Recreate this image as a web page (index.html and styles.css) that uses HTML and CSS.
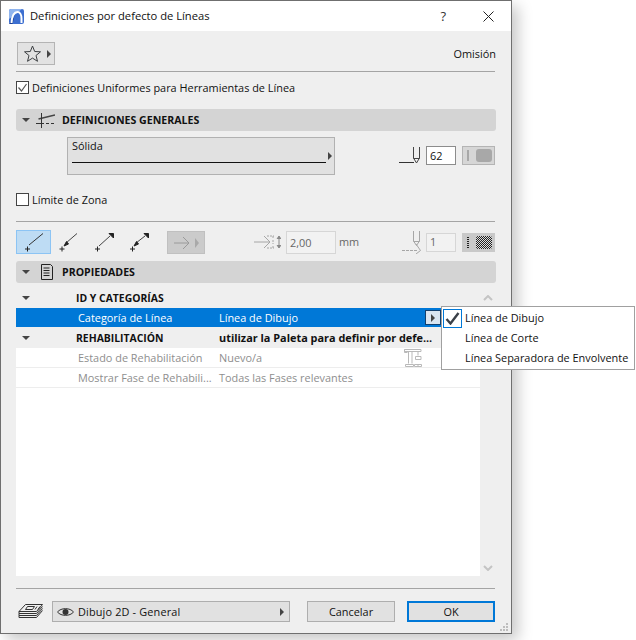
FILE: index.html
```html
<!DOCTYPE html>
<html lang="es">
<head>
<meta charset="utf-8">
<title>Definiciones por defecto de Líneas</title>
<link rel="stylesheet" href="styles.css">
</head>
<body>
<div class="window">
  <header class="titlebar">
    <svg class="app-icon" width="15" height="15" viewBox="0 0 15 15"><rect width="15" height="15" rx="2" fill="#3d6fd0"/><path d="M0 2a2 2 0 0 1 2-2h11l-13 10z" fill="#8fb4ee"/><path d="M0 15L5.500 7 3.500 15z" fill="#1c3f96"/><path d="M2.500 14C3 7 5.500 3 8.500 3c2.500 0 4 3 4 6.500V14" fill="none" stroke="#fff" stroke-width="2"/></svg>
    <span class="title">Definiciones por defecto de Líneas</span>
    <span class="help">?</span>
    <svg class="close" width="11" height="11" viewBox="0 0 11 11"><path d="M.5.500l10 10M10.500.500l-10 10" stroke="#222" stroke-width="1" fill="none"/></svg>
  </header>
  <main class="body">
    <div class="fav-row">
      <button class="fav">
        <svg width="17" height="17" viewBox="0 0 17 17"><path d="M8.500 1l2.200 5.500 5.800.3-4.500 3.700 1.500 5.800-5-3.200-5 3.200 1.500-5.800L.5 6.800l5.800-.3z" fill="none" stroke="#3c3f42" stroke-width="1"/></svg>
        <i class="tri"></i>
      </button>
      <span class="omision">Omisión</span>
    </div>
    <hr class="rule rule-a">
    <label class="check check-a"><span class="box"><svg width="13" height="13" viewBox="0 0 13 13"><path d="M2.500 6.500l3 3.500 5-7" fill="none" stroke="#555" stroke-width="1.200"/></svg></span>Definiciones Uniformes para Herramientas de Línea</label>
    <div class="section section-a">
      <i class="tri-down"></i>
      <svg class="sec-icon" width="19" height="15" viewBox="0 0 19 15"><path d="M2.500 6L19 2" stroke="#444" stroke-width="1.600" fill="none"/><path d="M5.500 0v15" stroke="#333" fill="none"/><path d="M0 10.500h8M10 10.500h3M15 10.500h3" stroke="#333" fill="none"/></svg>
      <span>DEFINICIONES GENERALES</span>
    </div>
    <div class="general">
      <div class="line-select">
        <div class="line-col">
          <span>Sólida</span>
          <i class="line"></i>
        </div>
        <i class="tri"></i>
      </div>
      <div class="pen-group">
        <svg class="pen1" width="21" height="19" viewBox="0 0 21 19"><path d="M0 16.500h15" stroke="#333" fill="none"/><path d="M14.500 1v11l3 5 3-5V1M14.500 12.500h6" stroke="#444" fill="none"/></svg>
        <span class="input pen-input">62</span>
        <span class="swatch"><i class="bar"></i><i class="blob"></i></span>
      </div>
    </div>
    <label class="check check-b"><span class="box"></span>Límite de Zona</label>
    <hr class="rule rule-b">
    <div class="tools">
      <button class="tool active"><svg width="33" height="22" viewBox="0 0 33 22"><path d="M12 14L26 2.500" stroke="#333" fill="none"/><path d="M10.500 15.500v5M8 18h5" stroke="#222" fill="none"/></svg></button>
      <button class="tool"><svg width="33" height="22" viewBox="0 0 33 22"><path d="M14 12L25 2.500" stroke="#444" fill="none"/><path d="M14.500 10.500l2 2.500-4.500 2z" fill="#222" stroke="#222"/><path d="M10 15.500v5M7.500 18h5" stroke="#222" fill="none"/></svg></button>
      <button class="tool"><svg width="33" height="22" viewBox="0 0 33 22"><path d="M12 15L23 5" stroke="#444" fill="none"/><path d="M22 2.500h4.500V7z" fill="#222" stroke="#222"/><path d="M10.500 15.500v5M8 18h5" stroke="#222" fill="none"/></svg></button>
      <button class="tool"><svg width="33" height="22" viewBox="0 0 33 22"><path d="M14 12L23 5" stroke="#444" fill="none"/><path d="M22 2.500h4.500V7z" fill="#222" stroke="#222"/><path d="M14.500 10.500l2 2.500-4.500 2z" fill="#222" stroke="#222"/><path d="M10.500 15.500v5M8 18h5" stroke="#222" fill="none"/></svg></button>
      <button class="arrow-btn">
        <svg width="16" height="14" viewBox="0 0 16 14"><path d="M0 7h15M9 1l6 6-6 6" stroke="#9a9a9a" fill="none"/></svg>
        <i class="tri tri-muted"></i>
      </button>
      <svg class="size-icon" width="27" height="16" viewBox="0 0 27 16"><path d="M0 8h15M10 2l6 6-6 6" stroke="#a6a6a6" fill="none"/><path d="M13 2h7M13 14h7M19 2v2M19 6v4M19 12v2" stroke="#a6a6a6" stroke-dasharray="2 1" fill="none"/><path d="M25 3v10M23 5l2-3 2 3M23 11l2 3 2-3" stroke="#888" fill="#888"/></svg>
      <span class="input size-input">2,00</span>
      <span class="unit">mm</span>
      <svg class="pen2" width="20" height="24" viewBox="0 0 20 24"><path d="M11.500 1v10l3 4.500 3-4.500V1M11.500 11.500h6" stroke="#a6a6a6" fill="none"/><path d="M0 20.500h16" stroke="#a6a6a6" stroke-dasharray="3 1" fill="none"/><path d="M14 14l4.500 6.500L14 24" stroke="#a6a6a6" fill="none"/></svg>
      <span class="input mini-input">1</span>
      <span class="swatch dark"><i class="bar dotted"></i><i class="blob checker"></i></span>
    </div>
    <div class="section section-b">
      <i class="tri-down"></i>
      <svg class="sec-icon doc" width="13" height="16" viewBox="0 0 13 16"><path d="M1.500.5h9l2 2v13h-11z" fill="none" stroke="#222"/><path d="M3.500 4h6M3.500 6.500h6M3.500 9h6M3.500 11.500h6" stroke="#222" fill="none"/></svg>
      <span>PROPIEDADES</span>
    </div>
    <div class="props">
      <div class="table">
        <div class="row group"><span class="exp"><i class="tri-down"></i></span><span class="c-name">ID Y CATEGORÍAS</span></div>
        <div class="row selected"><span class="exp"></span><span class="c-label">Categoría de Línea</span><span class="c-val">Línea de Dibujo</span><span class="drop"><i class="tri"></i></span></div>
        <div class="row group rehab"><span class="exp"><i class="tri-down"></i></span><span class="c-name">REHABILITACIÓN</span><span class="c-val">utilizar la Paleta para definir por defe...</span></div>
        <div class="row muted"><span class="exp"></span><span class="c-label">Estado de Rehabilitación</span><span class="c-val">Nuevo/a</span>
          <svg class="reno" width="18" height="18" viewBox="0 0 18 18"><path d="M.5.500h16.500v2H.5zM.5.500v3h3M4.500 2.500v12M8 2.500v12M14 2.500v4M11.500 7.500h5.500v3h-5.500zM1.500 15.500h8v2h-8zM10.500 15.500h7v2h-7zM14 15.500v2" stroke="#b9b9b9" fill="none"/></svg>
        </div>
        <div class="row muted"><span class="exp"></span><span class="c-label">Mostrar Fase de Rehabili...</span><span class="c-val">Todas las Fases relevantes</span></div>
      </div>
      <div class="scrollbar">
        <svg width="10" height="6" viewBox="0 0 10 6"><path d="M1 5l4-4 4 4" stroke="#c4c4c4" stroke-width="2" fill="none"/></svg>
        <svg width="10" height="6" viewBox="0 0 10 6"><path d="M1 1l4 4 4-4" stroke="#c4c4c4" stroke-width="2" fill="none"/></svg>
      </div>
    </div>
    <hr class="rule rule-c">
    <footer class="footer">
      <svg class="layers" width="25" height="15" viewBox="0 0 25 15"><path d="M7.500.5h17l-6 7H1z" fill="none" stroke="#333"/><path d="M9.500 2.500h7l-2 3h-7zM19 2.500l-2 3M22 2.500l-2 3" fill="none" stroke="#333"/><path d="M1 7.500v2h17.500l6-7M1 9.500v2h17.500l6-7M1 11.500v2h17.500l6-7" fill="none" stroke="#333"/></svg>
      <button class="layer-select">
        <svg width="17" height="10" viewBox="0 0 17 10"><path d="M.5 5C4 .5 13 .5 16.500 5 13 9.500 4 9.500.5 5z" fill="none" stroke="#333"/><circle cx="8.500" cy="5" r="3" fill="#333"/></svg>
        <span class="layer-name">Dibujo 2D - General</span>
        <i class="tri"></i>
      </button>
      <button class="btn cancel">Cancelar</button>
      <button class="btn ok">OK</button>
    </footer>
    <svg class="grip" width="9" height="9" viewBox="0 0 9 9"><path d="M6 0h2v2H6zM3 3h2v2H3zM6 3h2v2H6zM0 6h2v2H0zM3 6h2v2H3zM6 6h2v2H6z" fill="#bdbdbd"/></svg>
  </main>
  <div class="menu">
    <div class="menu-item"><span class="mark"><svg width="15" height="13" viewBox="0 0 15 13"><path d="M1.500 7l4 4.500L13.500 1" fill="none" stroke="#3a4048" stroke-width="2.400"/></svg></span>Línea de Dibujo</div>
    <div class="menu-item"><span class="mark none"></span>Línea de Corte</div>
    <div class="menu-item"><span class="mark none"></span>Línea Separadora de Envolvente</div>
  </div>
</div>
</body>
</html>
```
FILE: styles.css
```css
* { box-sizing: border-box; }
html, body { margin: 0; padding: 0; background: #fff; }
body { width: 636px; height: 640px; overflow: hidden; font: 10.9px/14px "Open Sans", sans-serif; color: #111; }
button { font: inherit; color: inherit; padding: 0; }
i { display: block; }

.window { position: relative; width: 512px; height: 634px; border: 1px solid #6f6f6f; background: #efefef; box-shadow: 6px 6px 14px rgba(0,0,0,.22); display: flex; flex-direction: column; }
.titlebar { height: 30px; flex: none; background: #fff; display: flex; align-items: center; padding: 0 17px 0 8px; }
.app-icon { margin-right: 6px; }
.title { flex: 1; font-size: 11.2px; }
.help { font-size: 13px; margin-right: 37px; color: #333; }
.body { position: relative; flex: 1; display: flex; flex-direction: column; padding: 11px 15px 0; }

.tri { width: 0; height: 0; flex: none; border-left: 4px solid #444; border-top: 4px solid transparent; border-bottom: 4px solid transparent; }
.tri-muted { border-left-color: #a9a9a9; border-top-width: 5px; border-bottom-width: 5px; }
.tri-down { width: 0; height: 0; flex: none; border-top: 4px solid #444; border-left: 4px solid transparent; border-right: 4px solid transparent; }

.fav-row { height: 23px; width: 480px; flex: none; display: flex; align-items: center; justify-content: space-between; }
.fav { width: 38px; height: 23px; margin-left: 1px; border: 1px solid #b4b4b4; background: #e2e2e2; display: flex; align-items: center; gap: 6px; padding-left: 6px; }
.rule { margin: 0; height: 1px; border: 0; background: #a4a4a4; flex: none; width: 479px; }
.rule-a { margin-top: 6px; }
.check { display: flex; align-items: center; gap: 3px; height: 13px; flex: none; }
.check-a { margin-top: 9px; }
.check-b { margin-top: 18px; }
.box { width: 13px; height: 13px; background: #fff; border: 1px solid #444; flex: none; position: relative; }
.box svg { position: absolute; left: -1px; top: -1px; }

.section { height: 22px; flex: none; width: 480px; background: #d4d4d4; border-radius: 3px; display: flex; align-items: center; padding-left: 6px; font-weight: 700; font-size: 10.6px; }
.section-a { margin-top: 15px; }
.section-b { margin-top: 7px; }
.sec-icon { margin-left: 6px; margin-right: 7px; }
.section-b .sec-icon { margin-left: 10px; margin-right: 9px; }

.general { height: 38px; flex: none; margin-top: 6px; display: flex; width: 479px; }
.line-select { margin-left: 51px; width: 268px; height: 38px; background: #e1e1e1; border: 1px solid #b1b1b1; display: flex; align-items: center; gap: 2px; padding: 0 2px 0 4px; }
.line-col { flex: 1; align-self: flex-start; padding-top: 1px; }
.line-col > span { display: block; }
.line { height: 1px; background: #111; margin-top: 9px; }
.pen-group { margin-left: 64px; display: flex; align-items: center; height: 19px; margin-top: 9px; }
.pen1 { margin-right: 6px; flex: none; }
.input { height: 19px; display: flex; align-items: center; background: #fff; border: 1px solid #8c8c8c; padding-left: 3px; flex: none; }
.pen-input { width: 30px; }
.swatch { width: 33px; height: 19px; margin-left: 6px; background: #d6d6d6; border: 1px solid #b4b4b4; display: flex; align-items: center; gap: 7px; padding-left: 4px; flex: none; }
.bar { width: 2px; height: 11px; background: #a8a8a8; }
.blob { width: 16px; height: 13px; border-radius: 3px; background: #a8a8a8; }
.swatch.dark { background: #c9c9c9; border-color: #c9c9c9; }
.dotted { background: repeating-linear-gradient(#222 0 1px, transparent 1px 2px); }
.checker { background: repeating-conic-gradient(#222 0 25%, #ddd 0 50%) 0 0 / 2px 2px; border-radius: 2px; }

.rule-b { margin-top: 15px; }
.tools { height: 24px; flex: none; margin-top: 8px; display: flex; align-items: center; width: 479px; }
.tool { width: 35px; height: 24px; border: 1px solid transparent; background: transparent; flex: none; }
.tool svg { display: block; }
.tool.active { background: #bedcf4; border-color: #8cc4f4; }
.arrow-btn { width: 38px; height: 23px; margin-left: 11px; margin-top: 1px; background: #cbcbcb; border: 1px solid #c0c0c0; display: flex; align-items: center; gap: 5px; padding-left: 6px; flex: none; }
.size-icon { margin-left: 49px; flex: none; }
.size-input { width: 50px; height: 23px; margin-left: 5px; margin-top: 1px; border-color: #d6d6d6; color: #666; background: #f2f2f2; }
.unit { margin-left: 3px; color: #666; width: 63px; flex: none; }
.pen2 { flex: none; }
.mini-input { width: 30px; margin-left: 4px; border-color: #d6d6d6; background: #f2f2f2; color: #666; }

.props { flex: none; width: 480px; height: 288px; margin-top: 5px; display: flex; }
.table { width: 464px; height: 288px; background: #fff; flex: none; }
.row { height: 20px; display: flex; align-items: center; position: relative; border-bottom: 1px solid #ededed; }
.row.group { background: #efefef; font-weight: 700; border-bottom: 0; }
.row.rehab { height: 21px; }
.group .c-name { font-size: 10.4px; }
.row.selected { height: 19px; background: #0078d7; color: #fff; border-bottom: 0; }
.row.muted { color: #8e8e8e; }
.exp { width: 60px; flex: none; padding-left: 6px; }
.c-name { width: 143px; flex: none; }
.c-label { width: 141px; flex: none; margin-left: 2px; white-space: nowrap; }
.c-val { white-space: nowrap; }
.drop { position: absolute; right: 39px; top: 2px; width: 16px; height: 15px; background: #d9e5f1; border: 1px solid #11406f; display: flex; align-items: center; justify-content: center; color: #111; }
.reno { position: absolute; left: 388px; top: 1px; }
.scrollbar { width: 16px; height: 288px; display: flex; flex-direction: column; justify-content: space-between; align-items: center; padding: 7px 0 5px; }

.rule-c { margin-top: 12px; }
.footer { display: flex; align-items: center; height: 21px; margin-top: 12px; width: 479px; flex: none; }
.layers { margin-left: 2px; flex: none; }
.layer-select { width: 238px; height: 21px; margin-left: 9px; background: #e1e1e1; border: 1px solid #aeaeae; display: flex; align-items: center; padding: 0 5px 0 4px; text-align: left; flex: none; }
.layer-name { flex: 1; margin-left: 4px; letter-spacing: .15px; }
.btn { height: 21px; background: #e1e1e1; border: 1px solid #aeaeae; flex: none; }
.cancel { width: 88px; margin-left: 17px; }
.ok { width: 88px; margin-left: 12px; border: 2px solid #0078d7; }
.grip { position: absolute; right: 2px; bottom: 1px; }

.menu { position: absolute; left: 440px; top: 305px; width: 194px; height: 64px; background: #fff; border: 1px solid #a0a0a0; padding: 1px 0 0 1px; z-index: 2; }
.menu-item { height: 20px; display: flex; align-items: center; gap: 3px; white-space: nowrap; }
.mark { width: 19px; height: 19px; border: 1px solid #0078d7; display: flex; align-items: center; justify-content: center; flex: none; }
.mark.none { border-color: transparent; }
```
